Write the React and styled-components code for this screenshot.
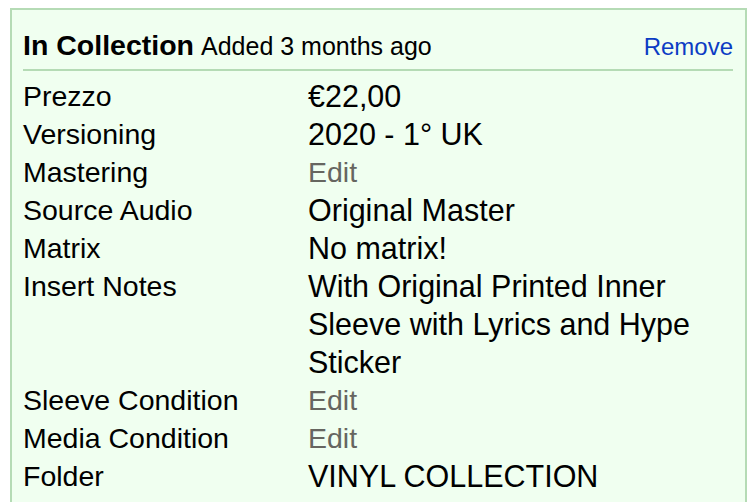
import React from 'react';
import styled, { createGlobalStyle } from 'styled-components';

const rows = [
    { label: 'Prezzo', value: '€22,00' },
    { label: 'Versioning', value: '2020 - 1° UK' },
    { label: 'Mastering', value: 'Edit', edit: true },
    { label: 'Source Audio', value: 'Original Master' },
    { label: 'Matrix', value: 'No matrix!' },
    { label: 'Insert Notes', value: 'With Original Printed Inner Sleeve with Lyrics and Hype Sticker' },
    { label: 'Sleeve Condition', value: 'Edit', edit: true },
    { label: 'Media Condition', value: 'Edit', edit: true },
    { label: 'Folder', value: 'VINYL COLLECTION' },
];

export default function App() {
    return (
        <>
            <GlobalStyle />
            <Page>
                <Card>
                    <Header>
                        <HeaderLeft>
                            <Title>In Collection</Title>
                            <Added>Added 3 months ago</Added>
                        </HeaderLeft>
                        <RemoveLink href="#">Remove</RemoveLink>
                    </Header>
                    <Details>
                        {rows.map((row) => (
                            <React.Fragment key={row.label}>
                                <Label>{row.label}</Label>
                                <Value $edit={row.edit}>{row.value}</Value>
                            </React.Fragment>
                        ))}
                    </Details>
                </Card>
            </Page>
        </>
    );
}

const GlobalStyle = createGlobalStyle`
    html, body {
        margin: 0;
        padding: 0;
        background: #fff;
        overflow: hidden;
    }
    body {
        font-family: "Liberation Sans", Arial, Helvetica, sans-serif;
        color: #000;
    }
`;

const Page = styled.div`
    padding: 8px 9px 0 10px;
`;

const Card = styled.div`
    background-color: #f0fff0;
    border: 2px solid #b5dbb5;
    padding: 16px 12px 20px 11px;
`;

const Header = styled.div`
    display: flex;
    justify-content: space-between;
    align-items: baseline;
    padding-bottom: 3px;
    border-bottom: 2px solid #b5dbb5;
    line-height: 38px;
`;

const HeaderLeft = styled.div`
    display: flex;
    align-items: baseline;
    gap: 7px;
`;

const Title = styled.span`
    font-size: 28.5px;
    font-weight: bold;
`;

const Added = styled.span`
    font-size: 25px;
`;

const RemoveLink = styled.a`
    font-size: 24px;
    color: #0b3cc4;
    text-decoration: none;
`;

const Details = styled.div`
    display: grid;
    grid-template-columns: 285px 1fr;
    margin-top: 6px;
    font-size: 28.5px;
    line-height: 38px;
`;

const Label = styled.div``;

const Value = styled.div`
    font-size: ${(p) => (p.$edit ? '28.5px' : '30.5px')};
    color: ${(p) => (p.$edit ? '#666660' : '#000')};
`;
